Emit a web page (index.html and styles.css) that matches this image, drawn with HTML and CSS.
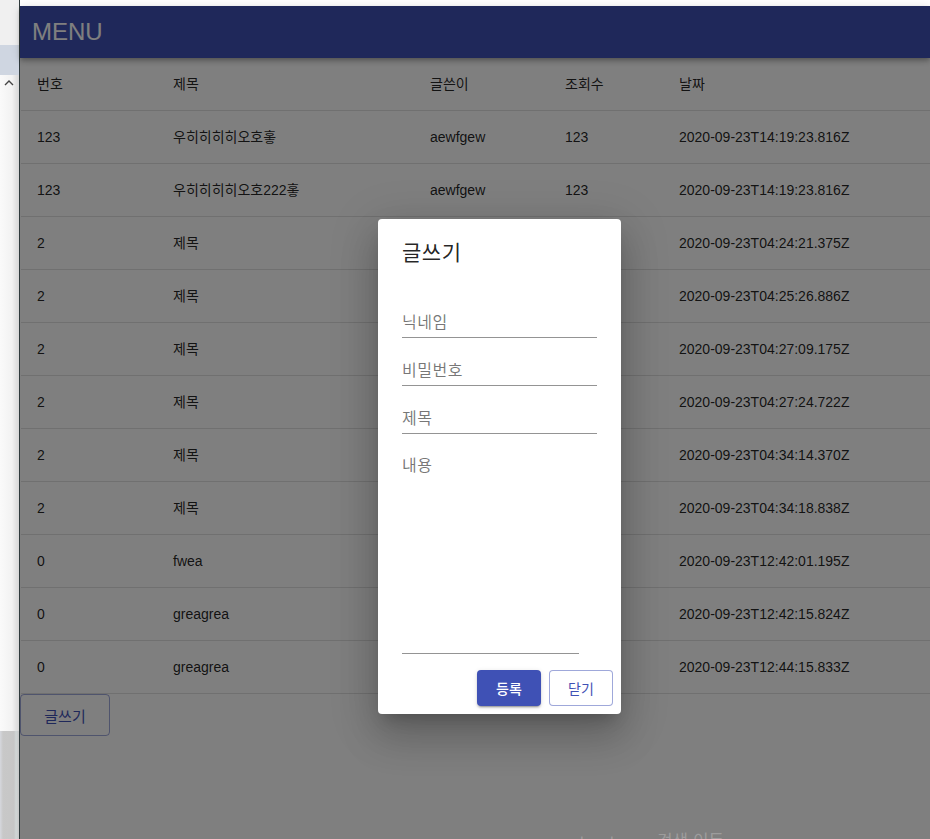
FILE: index.html
```html
<!DOCTYPE html>
<html lang="ko">
<head>
<meta charset="utf-8">
<title>MENU</title>
<link rel="stylesheet" href="styles.css">
</head>
<body>
<div class="screen">
  <div class="rail">
    <div class="rail-top"></div>
    <div class="rail-tab"></div>
    <div class="rail-track">
      <svg class="rail-arrow" width="10" height="6" viewBox="0 0 10 6"><path d="M1 5 L5 1 L9 5" fill="none" stroke="#444" stroke-width="1.4"/></svg>
    </div>
    <div class="rail-thumb"></div>
  </div>
  <div class="frame">
    <div class="frame-top"></div>
    <div class="app">
      <header class="appbar"><span class="brand">MENU</span></header>
      <table class="board">
        <thead>
          <tr><th class="c1">번호</th><th class="c2">제목</th><th class="c3">글쓴이</th><th class="c4">조회수</th><th class="c5">날짜</th></tr>
        </thead>
        <tbody>
          <tr><td>123</td><td>우히히히히오호홓</td><td>aewfgew</td><td>123</td><td>2020-09-23T14:19:23.816Z</td></tr>
          <tr><td>123</td><td>우히히히히오호222홓</td><td>aewfgew</td><td>123</td><td>2020-09-23T14:19:23.816Z</td></tr>
          <tr><td>2</td><td>제목</td><td></td><td></td><td>2020-09-23T04:24:21.375Z</td></tr>
          <tr><td>2</td><td>제목</td><td></td><td></td><td>2020-09-23T04:25:26.886Z</td></tr>
          <tr><td>2</td><td>제목</td><td></td><td></td><td>2020-09-23T04:27:09.175Z</td></tr>
          <tr><td>2</td><td>제목</td><td></td><td></td><td>2020-09-23T04:27:24.722Z</td></tr>
          <tr><td>2</td><td>제목</td><td></td><td></td><td>2020-09-23T04:34:14.370Z</td></tr>
          <tr><td>2</td><td>제목</td><td></td><td></td><td>2020-09-23T04:34:18.838Z</td></tr>
          <tr><td>0</td><td>fwea</td><td></td><td></td><td>2020-09-23T12:42:01.195Z</td></tr>
          <tr><td>0</td><td>greagrea</td><td></td><td></td><td>2020-09-23T12:42:15.824Z</td></tr>
          <tr><td>0</td><td>greagrea</td><td></td><td></td><td>2020-09-23T12:44:15.833Z</td></tr>
        </tbody>
      </table>
      <button class="write-btn" type="button">글쓰기</button>

      <div class="backdrop"></div>
      <div class="peek">ㄴ &nbsp; ㄴ &nbsp; &nbsp; &nbsp; 검색 이동</div>

      <div class="dialog">
        <h2 class="dialog-title">글쓰기</h2>
        <div class="dialog-content">
          <label class="field"><span class="field-label">닉네임</span></label>
          <label class="field"><span class="field-label">비밀번호</span></label>
          <label class="field"><span class="field-label">제목</span></label>
          <label class="field field-multi"><span class="field-label">내용</span></label>
        </div>
        <div class="dialog-actions">
          <button class="btn btn-primary" type="button">등록</button>
          <button class="btn btn-outline" type="button">닫기</button>
        </div>
      </div>
    </div>
  </div>
</div>
</body>
</html>
```

FILE: styles.css
```css
html, body {
  margin: 0;
  padding: 0;
  background: #ffffff;
}

body {
  font-family: "Liberation Sans", Arial, "Noto Sans CJK KR", sans-serif;
  color: rgba(0, 0, 0, 0.87);
}

.screen {
  display: flex;
  width: 930px;
  height: 839px;
  overflow: hidden;
}

/* left scroll rail */
.rail {
  width: 19px;
  flex: none;
  display: flex;
  flex-direction: column;
  border-right: 1px solid #2f3a3c;
  background: linear-gradient(to right, #fafafa 0, #f2f2f2 12px, #e2e2e2 16px, #d8d8d8 19px);
}

.rail-top {
  height: 45px;
  background: #f0f0f0;
}

.rail-tab {
  height: 30px;
  background: #cfd6e1;
}

.rail-track {
  flex: 1;
  position: relative;
}

.rail-arrow {
  position: absolute;
  left: 4px;
  top: 5px;
}

.rail-thumb {
  height: 108px;
  background: linear-gradient(to right, #d6d8de 0, #c8c8c8 3px, #c6c6c6 14px, #d0d6d6 16px, #c8c8c8 19px);
}

/* main frame */
.frame {
  flex: 1;
  display: flex;
  flex-direction: column;
}

.frame-top {
  height: 6px;
  background: #ffffff;
  flex: none;
}

.app {
  position: relative;
  flex: 1;
  background: #ffffff;
}

.appbar {
  height: 52px;
  background: #3f51b5;
  display: flex;
  align-items: center;
  padding-left: 12px;
  box-shadow: 0 2px 4px -1px rgba(0,0,0,0.2), 0 4px 5px 0 rgba(0,0,0,0.14), 0 1px 10px 0 rgba(0,0,0,0.12);
  position: relative;
  z-index: 1;
}

.brand {
  color: #ffffff;
  font-size: 24px;
  line-height: 1;
  font-family: "Liberation Sans", Arial, sans-serif;
}

.board {
  width: 909px;
  margin-left: 1px;
  border-collapse: collapse;
  table-layout: fixed;
}

.board th,
.board td {
  padding: 16px;
  font-size: 14px;
  line-height: 20px;
  text-align: left;
  border-bottom: 1px solid #e0e0e0;
  white-space: nowrap;
  font-weight: 400;
  color: rgba(0, 0, 0, 0.87);
}

.c1 { width: 104px; }
.c2 { width: 225px; }
.c3 { width: 103px; }
.c4 { width: 82px; }
.c5 { width: auto; }

.write-btn {
  display: flex;
  align-items: center;
  justify-content: center;
  width: 90px;
  height: 42px;
  margin: 0;
  padding: 0;
  background: transparent;
  border: 1px solid rgba(63, 81, 181, 0.5);
  border-radius: 4px;
  color: #3f51b5;
  font-family: "Noto Sans CJK KR", sans-serif;
  font-size: 15px;
}

/* overlay */
.backdrop {
  position: absolute;
  inset: 0;
  background: rgba(0, 0, 0, 0.5);
  z-index: 2;
}

.peek {
  position: absolute;
  left: 558px;
  top: 824px;
  z-index: 3;
  color: #9c9c9c;
  font-family: "Noto Sans CJK KR", sans-serif;
  font-size: 17px;
  line-height: 20px;
  white-space: nowrap;
}

.dialog {
  position: absolute;
  left: 358px;
  top: 213px;
  width: 243px;
  height: 495px;
  box-sizing: border-box;
  background: #ffffff;
  border-radius: 4px;
  z-index: 4;
  display: flex;
  flex-direction: column;
  box-shadow: 0 11px 15px -7px rgba(0,0,0,0.2), 0 24px 38px 3px rgba(0,0,0,0.14), 0 9px 46px 8px rgba(0,0,0,0.12);
}

.dialog-title {
  margin: 0;
  padding: 16px 24px;
  font-family: "Noto Sans CJK KR", sans-serif;
  font-size: 21px;
  font-weight: 400;
  line-height: 32px;
  letter-spacing: 0.5px;
  color: rgba(0, 0, 0, 0.87);
}

.dialog-content {
  padding: 7px 24px 0 24px;
  display: flex;
  flex-direction: column;
  flex: 1;
}

.field {
  display: flex;
  align-items: center;
  height: 48px;
  padding-top: 16px;
  box-sizing: border-box;
  border-bottom: 1px solid rgba(0, 0, 0, 0.42);
}

.field-label {
  font-family: "Noto Sans CJK KR", sans-serif;
  font-size: 16px;
  color: rgba(0, 0, 0, 0.54);
  line-height: 19px;
  letter-spacing: 0.5px;
}

.field-multi {
  height: 220px;
  align-items: flex-start;
  padding-top: 21px;
  margin-right: 18px;
}

.dialog-actions {
  display: flex;
  justify-content: flex-end;
  gap: 8px;
  padding: 16px 8px 8px 8px;
}

.btn {
  width: 64px;
  height: 36px;
  margin: 0;
  padding: 0;
  border-radius: 4px;
  font-family: "Noto Sans CJK KR", sans-serif;
  font-size: 14px;
  font-weight: 500;
  box-sizing: border-box;
}

.btn-primary {
  background: #3f51b5;
  color: #ffffff;
  border: none;
  box-shadow: 0 3px 1px -2px rgba(0,0,0,0.2), 0 2px 2px 0 rgba(0,0,0,0.14), 0 1px 5px 0 rgba(0,0,0,0.12);
}

.btn-outline {
  background: #ffffff;
  color: #3f51b5;
  border: 1px solid rgba(63, 81, 181, 0.5);
  font-weight: 400;
}
```
